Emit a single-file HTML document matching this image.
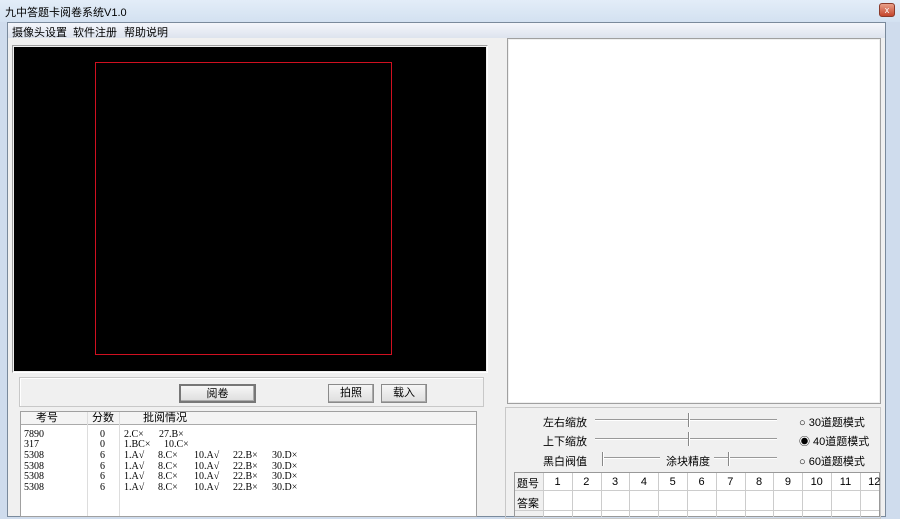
<!DOCTYPE html><html><head><meta charset="utf-8"><style>
*{margin:0;padding:0;box-sizing:border-box}
body{width:900px;height:517px;overflow:hidden;background:#cfdced;font-family:"Liberation Sans","Noto Sans CJK SC",sans-serif;font-size:11px;color:#000;position:relative}
.a{position:absolute}
.btn{position:absolute;background:linear-gradient(#f6f6f6,#dedede);border:1px solid #8a8a8a;box-shadow:inset -1px -1px 0 #aaa;text-align:center;line-height:17px;font-size:11px}
.row{position:absolute;left:0;width:457px;height:11px;font-family:"Liberation Serif","Noto Sans CJK SC",serif;font-size:10px;line-height:11px}
.row span{position:absolute}
.sl{position:absolute;height:2px;border-top:1px solid #999;border-bottom:1px solid #fff}
.th{position:absolute;width:2px;height:14px;border-left:1px solid #888;border-right:1px solid #fff}
</style></head><body>
<div class="a" style="left:0;top:0;width:900px;height:22px;background:linear-gradient(#e3edf8,#d3e1f1)"></div>
<div class="a" style="left:5px;top:4px;font-size:11px">九中答题卡阅卷系统V1.0</div>
<div class="a" style="left:879px;top:3px;width:16px;height:14px;background:linear-gradient(#e8a08a,#c4452c);border:1px solid #8b3a2a;border-radius:3px;color:#fff;font-size:9px;text-align:center;line-height:12px">x</div>
<div class="a" style="left:7px;top:22px;width:879px;height:495px;background:#f0f0f0;border:1px solid #7a8a9c"></div>
<div class="a" style="left:8px;top:23px;width:877px;height:15px;background:linear-gradient(#f4f6fb,#dde3ee)"></div>
<div class="a" style="left:12px;top:24px">摄像头设置</div>
<div class="a" style="left:73px;top:24px">软件注册</div>
<div class="a" style="left:124px;top:24px">帮助说明</div>
<div class="a" style="left:12px;top:45px;width:476px;height:328px;border:1px solid #a0a0a0;border-right-color:#fff;border-bottom-color:#fff"></div>
<div class="a" style="left:14px;top:47px;width:472px;height:324px;background:#000"></div>
<div class="a" style="left:95px;top:62px;width:297px;height:293px;border:1px solid #d01020"></div>
<div class="a" style="left:507px;top:38px;width:374px;height:366px;border:1px solid #a0a0a0"></div>
<div class="a" style="left:509px;top:40px;width:370px;height:362px;background:#fff"></div>
<div class="a" style="left:19px;top:377px;width:465px;height:30px;border:1px solid #c8c8c8;box-shadow:inset 1px 1px 0 #fff"></div>
<div class="btn" style="left:179px;top:384px;width:77px;height:19px;border:2px solid #777">阅卷</div>
<div class="btn" style="left:328px;top:384px;width:46px;height:19px">拍照</div>
<div class="btn" style="left:381px;top:384px;width:46px;height:19px">载入</div>
<div class="a" style="left:20px;top:411px;width:457px;height:106px;background:#fff;border:1px solid #a0a0a0;overflow:hidden">
<div class="a" style="left:0;top:0;width:457px;height:13px;background:#f4f4f4;border-bottom:1px solid #aaa"></div>
<div class="a" style="left:66px;top:0;width:1px;height:106px;background:#ddd"></div>
<div class="a" style="left:98px;top:0;width:1px;height:106px;background:#ddd"></div>
<div class="a" style="left:15px;top:0;line-height:13px">考号</div>
<div class="a" style="left:71px;top:0;line-height:13px">分数</div>
<div class="a" style="left:122px;top:0;line-height:13px">批阅情况</div>
<div class="row" style="top:17px"><span style="left:3px">7890</span><span style="left:79px">0</span><span style="left:103px">2.C×</span><span style="left:138px">27.B×</span></div>
<div class="row" style="top:27px"><span style="left:3px">317</span><span style="left:79px">0</span><span style="left:103px">1.BC×</span><span style="left:143px">10.C×</span></div>
<div class="row" style="top:38px"><span style="left:3px">5308</span><span style="left:79px">6</span><span style="left:103px">1.A√</span><span style="left:137px">8.C×</span><span style="left:173px">10.A√</span><span style="left:212px">22.B×</span><span style="left:251px">30.D×</span></div>
<div class="row" style="top:49px"><span style="left:3px">5308</span><span style="left:79px">6</span><span style="left:103px">1.A√</span><span style="left:137px">8.C×</span><span style="left:173px">10.A√</span><span style="left:212px">22.B×</span><span style="left:251px">30.D×</span></div>
<div class="row" style="top:59px"><span style="left:3px">5308</span><span style="left:79px">6</span><span style="left:103px">1.A√</span><span style="left:137px">8.C×</span><span style="left:173px">10.A√</span><span style="left:212px">22.B×</span><span style="left:251px">30.D×</span></div>
<div class="row" style="top:70px"><span style="left:3px">5308</span><span style="left:79px">6</span><span style="left:103px">1.A√</span><span style="left:137px">8.C×</span><span style="left:173px">10.A√</span><span style="left:212px">22.B×</span><span style="left:251px">30.D×</span></div>
</div>
<div class="a" style="left:505px;top:407px;width:376px;height:112px;border:1px solid #c8c8c8"></div>
<div class="a" style="left:543px;top:414px">左右缩放</div>
<div class="a" style="left:543px;top:433px">上下缩放</div>
<div class="a" style="left:543px;top:453px">黑白阀值</div>
<div class="a" style="left:666px;top:453px">涂块精度</div>
<div class="sl" style="left:595px;top:419px;width:182px"></div><div class="th" style="left:688px;top:413px"></div>
<div class="sl" style="left:595px;top:438px;width:182px"></div><div class="th" style="left:688px;top:432px"></div>
<div class="sl" style="left:603px;top:457px;width:57px"></div><div class="th" style="left:602px;top:452px"></div>
<div class="sl" style="left:714px;top:457px;width:63px"></div><div class="th" style="left:728px;top:452px"></div>
<div class="a" style="left:799px;top:414px">○ 30道题模式</div>
<div class="a" style="left:799px;top:433px">◉ 40道题模式</div>
<div class="a" style="left:799px;top:453px">○ 60道题模式</div>
<div class="a" style="left:514px;top:472px;width:366px;height:45px;border:1px solid #999;background:#fff;overflow:hidden">
<div class="a" style="left:0;top:0;width:29px;height:45px;background:#f0f0f0"></div>
<div class="a" style="left:0;top:17px;width:366px;height:1px;background:#ccc"></div>
<div class="a" style="left:0;top:37px;width:366px;height:1px;background:#ccc"></div>
<div class="a" style="left:2px;top:2px">题号</div><div class="a" style="left:2px;top:22px">答案</div>
</div>
<div id="c"></div>
<script>
var h='';for(var i=0;i<12;i++){var x=543+i*28.8;h+='<div class="a" style="left:'+x+'px;top:473px;width:1px;height:44px;background:#ccc"></div><div class="a" style="left:'+(x+3)+'px;top:476px;width:23px;text-align:center">'+(i+1)+'</div>';}
document.getElementById('c').innerHTML=h;
</script>
</body></html>
